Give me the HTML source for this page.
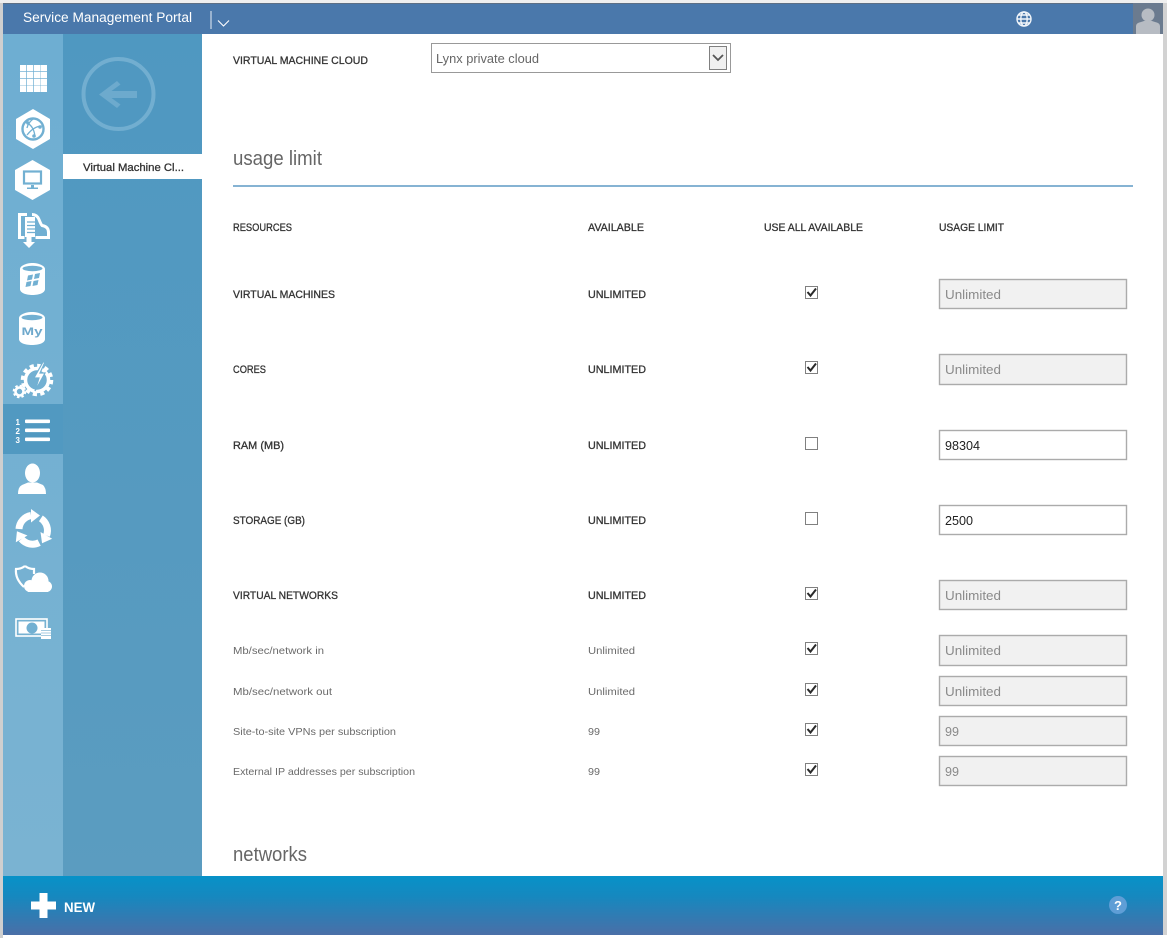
<!DOCTYPE html>
<html lang="en"><head><meta charset="utf-8"><title>Service Management Portal</title>
<style>
html,body{margin:0;padding:0;background:#fff}
svg{display:block}
text{font-family:"Liberation Sans",sans-serif}
.h{font-size:11px;fill:#333;stroke:#333;stroke-width:.3px}
.s{font-size:10.5px;fill:#6a6a6a}
.i{font-size:13px;fill:#8a8a8a}
.v{font-size:13px;fill:#222}
.b{fill:#f1f1f1;stroke:#ababab;stroke-width:1.4}
.w{fill:#fff;stroke:#ababab;stroke-width:1.4}
.c{fill:#fff;stroke:#808080;stroke-width:1}
.k{fill:none;stroke:#2a2a2a;stroke-width:2}
</style></head><body>
<svg width="1167" height="938" viewBox="0 0 1167 938" xmlns="http://www.w3.org/2000/svg">
<defs>
<linearGradient id="bot" x1="0" y1="0" x2="0" y2="1"><stop offset="0" stop-color="#0792c8"/><stop offset=".35" stop-color="#1688bf"/><stop offset="1" stop-color="#4a6fa7"/></linearGradient>
<linearGradient id="side" x1="0" y1="0" x2="0" y2="1"><stop offset="0" stop-color="#6eaed2"/><stop offset="1" stop-color="#7ab3d2"/></linearGradient>
<linearGradient id="sub" x1="0" y1="0" x2="0" y2="1"><stop offset="0" stop-color="#4f98c1"/><stop offset="1" stop-color="#5b9cc0"/></linearGradient>
</defs>
<rect width="1167" height="938" fill="#fff"/>
<rect x="0" y="0" width="3" height="938" fill="#cfcfcf"/>
<rect x="1163" y="3" width="4" height="932" fill="#d2d2d2"/>
<rect x="0" y="0" width="1167" height="3" fill="#efefef"/>
<rect x="3" y="3" width="1160" height="31" fill="#4a78ab"/>
<rect x="3" y="3" width="1160" height="1" fill="#5d6f85"/>

<!-- top bar -->
<text x="23" y="22" font-size="13.5" fill="#fff" textLength="169" lengthAdjust="spacingAndGlyphs">Service Management Portal</text>
<rect x="210.500" y="11" width="1" height="18" fill="#e8eef5"/>
<path d="M218 20.500l5.500 5.500 5.500-5.500" fill="none" stroke="#fff" stroke-width="1.100"/>
<g fill="none" stroke="#f2f6fa" stroke-width="1.400"><circle cx="1024" cy="19" r="7"/><ellipse cx="1024" cy="19" rx="3.200" ry="7"/><path d="M1017 19h14M1018 15h12M1018 23h12"/></g>
<rect x="1133" y="3" width="30" height="31" fill="#6b7b8f"/>
<circle cx="1148" cy="15" r="6.500" fill="#b7bcc3"/>
<path d="M1136 34v-8q0-3 5-4l3-1h8l3 1q5 1 5 4v8z" fill="#b7bcc3"/>

<!-- side -->
<rect x="3" y="34" width="60" height="842" fill="url(#side)"/>
<rect x="63" y="34" width="139" height="842" fill="url(#sub)"/>
<rect x="3" y="404" width="60" height="50" fill="#5199c1"/>

<!-- back -->
<circle cx="118.500" cy="94" r="35" fill="none" stroke="#72aed0" stroke-width="4"/>
<path d="M99 94.500L117 81l3.500 3.500-9 6.500h25.500v7h-25.500l9 6.500-3.500 3.500z" fill="#6daacd"/>
<rect x="63" y="154" width="139" height="25" fill="#fff"/>
<text x="83" y="171" class="h" textLength="101" lengthAdjust="spacingAndGlyphs">Virtual Machine Cl...</text>

<!-- grid icon -->
<g fill="#fff">
<g><rect x="20" y="65" width="6.300" height="6.300"/><rect x="27" y="65" width="6.300" height="6.300"/><rect x="34" y="65" width="6.300" height="6.300"/><rect x="40.700" y="65" width="6.300" height="6.300"/></g>
<g><rect x="20" y="72" width="6.300" height="6.300"/><rect x="27" y="72" width="6.300" height="6.300"/><rect x="34" y="72" width="6.300" height="6.300"/><rect x="40.700" y="72" width="6.300" height="6.300"/></g>
<g><rect x="20" y="79" width="6.300" height="6.300"/><rect x="27" y="79" width="6.300" height="6.300"/><rect x="34" y="79" width="6.300" height="6.300"/><rect x="40.700" y="79" width="6.300" height="6.300"/></g>
<g><rect x="20" y="85.700" width="6.300" height="6.300"/><rect x="27" y="85.700" width="6.300" height="6.300"/><rect x="34" y="85.700" width="6.300" height="6.300"/><rect x="40.700" y="85.700" width="6.300" height="6.300"/></g>
</g>

<!-- hex globe -->
<path d="M33 109l17 10v20l-17 10-17-10v-20z" fill="#fff"/>
<g fill="none" stroke="#72b0d2"><circle cx="33" cy="129" r="10.500" stroke-width="2.400"/><path d="M25 122q9 3 10 15M27 135q7-9 15-9M33 119q-5 4-6 9" stroke-width="1.300"/></g>
<circle cx="28" cy="123" r="1.800" fill="#72b0d2"/><circle cx="40" cy="127" r="1.800" fill="#72b0d2"/><circle cx="34" cy="136" r="1.800" fill="#72b0d2"/>

<!-- hex monitor -->
<path d="M32.500 160l17.500 10v20l-17.500 10-17.500-10v-20z" fill="#fff"/>
<rect x="24" y="171.500" width="17" height="12" fill="#fff" stroke="#72b0d2" stroke-width="2.200"/>
<path d="M31 185h3v2.500h4v1.500h-11v-1.500h4z" fill="#72b0d2"/>

<!-- storage -->
<path d="M27 214.500h-7.500v23h5" fill="none" stroke="#fff" stroke-width="3"/>
<path d="M32 214.500q5 0 7 5t3 6q6.500 1 6.500 7v5h-13" fill="none" stroke="#fff" stroke-width="3"/>
<rect x="25" y="217" width="10" height="20" fill="#fff"/>
<path d="M27 222h8M27 225.500h8M27 229h8M27 232.500h8" stroke="#72b0d2" stroke-width="1.200"/>
<path d="M26.500 236h5v6h3.500l-6 6-6-6h3.500z" fill="#fff"/>

<!-- SQL db -->
<path d="M20 269c0-3 6-6 12.500-6s12.500 3 12.500 6v20c0 4-6 6-12.500 6s-12.500-2-12.500-6z" fill="#fff"/>
<ellipse cx="32.500" cy="268.500" rx="10" ry="2.700" fill="#72b0d2"/>
<g fill="#72b0d2"><path d="M28 275.500l5-1-1 5-5 1zM35 274l5-1-1 5-5 1zM26.500 282l5-1-1 5-5 1zM33.500 281l5-1-1 5-5 1z"/></g>

<!-- My db -->
<path d="M19 318c0-3 6-6 13-6s13 3 13 6v21c0 4-6 6-13 6s-13-2-13-6z" fill="#fff"/>
<ellipse cx="32" cy="317.500" rx="10.500" ry="2.700" fill="#72b0d2"/>
<text x="32" y="335" font-size="11" font-weight="bold" fill="#6fa9cc" text-anchor="middle" textLength="21" lengthAdjust="spacingAndGlyphs">My</text>

<!-- gears -->
<circle cx="37" cy="380" r="11.500" fill="none" stroke="#fff" stroke-width="3.500"/>
<circle cx="37" cy="380" r="14.500" fill="none" stroke="#fff" stroke-width="3.500" stroke-dasharray="4.200 3.400"/>
<path d="M43 362l-9 16h5l-4 13 10-18h-5l5-11z" fill="#fff" stroke="#72b0d2" stroke-width="1.200"/>
<circle cx="19.500" cy="391.500" r="4" fill="none" stroke="#fff" stroke-width="2.600"/>
<circle cx="19.500" cy="391.500" r="5.600" fill="none" stroke="#fff" stroke-width="2.400" stroke-dasharray="2.400 2"/>

<!-- list active -->
<g fill="#fff">
<rect x="25" y="419.500" width="25" height="3.600" rx="1"/><rect x="25" y="428.500" width="25" height="3.600" rx="1"/><rect x="25" y="437.500" width="25" height="3.600" rx="1"/>
<text x="15.500" y="425" font-size="8" font-weight="bold">1</text><text x="15.500" y="434" font-size="8" font-weight="bold">2</text><text x="15.500" y="443" font-size="8" font-weight="bold">3</text>
</g>

<!-- user -->
<ellipse cx="32.500" cy="473" rx="7.500" ry="9.500" fill="#fff"/>
<path d="M18 494q0-7 4-9l6-2.500h9l6 2.500q3 3 3 9z" fill="#fff"/>

<!-- recycle -->
<g transform="translate(33 530)" fill="#fff">
<g><path d="M-14-1A14.500 14.500 0 0 1-2-14.500" fill="none" stroke="#fff" stroke-width="7"/><path d="M-2-21L7-14.500-2-7.500z"/></g>
<g transform="rotate(120)"><path d="M-14-1A14.500 14.500 0 0 1-2-14.500" fill="none" stroke="#fff" stroke-width="7"/><path d="M-2-21L7-14.500-2-7.500z"/></g>
<g transform="rotate(240)"><path d="M-14-1A14.500 14.500 0 0 1-2-14.500" fill="none" stroke="#fff" stroke-width="7"/><path d="M-2-21L7-14.500-2-7.500z"/></g>
</g>

<!-- shield cloud -->
<path d="M25 566q4 3 9 3v5M25 566q-4 3-9 3q-1 10 8 18" fill="none" stroke="#fff" stroke-width="2.200"/>
<g fill="#fff"><circle cx="30" cy="586" r="6"/><circle cx="40" cy="581" r="8.500"/><circle cx="46.500" cy="586.500" r="5.500"/><rect x="28" y="584" width="20" height="8"/></g>

<!-- money -->
<rect x="16" y="619" width="31" height="17" fill="none" stroke="#fff" stroke-width="1.600"/>
<rect x="18.500" y="621.500" width="26" height="12" fill="#fff"/>
<circle cx="32" cy="628" r="5.500" fill="#72b0d2"/>
<rect x="41" y="628" width="10" height="11" fill="#fff"/>
<path d="M41 630.500h10M41 633h10M41 635.500h10" stroke="#a5cbe0" stroke-width="1"/>

<!-- content -->
<text x="233" y="64" class="h" textLength="135" lengthAdjust="spacingAndGlyphs">VIRTUAL MACHINE CLOUD</text>
<rect x="431.500" y="43.500" width="299" height="29" fill="#fff" stroke="#999"/>
<text x="436" y="63" font-size="13" fill="#666" textLength="103" lengthAdjust="spacingAndGlyphs">Lynx private cloud</text>
<rect x="709.500" y="46.500" width="17" height="23" fill="#f0f0f0" stroke="#808080"/>
<path d="M713 55l5 5 5-5" fill="none" stroke="#555" stroke-width="1.800"/>

<text x="233" y="165" font-size="20" fill="#666" textLength="89" lengthAdjust="spacingAndGlyphs">usage limit</text>
<rect x="233" y="185" width="900" height="2" fill="#86b3d3"/>

<text x="233" y="231" class="h" textLength="59" lengthAdjust="spacingAndGlyphs">RESOURCES</text>
<text x="588" y="231" class="h" textLength="56" lengthAdjust="spacingAndGlyphs">AVAILABLE</text>
<text x="764" y="231" class="h" textLength="99" lengthAdjust="spacingAndGlyphs">USE ALL AVAILABLE</text>
<text x="939" y="231" class="h" textLength="65" lengthAdjust="spacingAndGlyphs">USAGE LIMIT</text>

<text x="233" y="298" class="h" textLength="102" lengthAdjust="spacingAndGlyphs">VIRTUAL MACHINES</text>
<text x="588" y="298" class="h" textLength="58" lengthAdjust="spacingAndGlyphs">UNLIMITED</text>
<rect x="805.500" y="286.500" width="12" height="12" class="c"/><path d="M807.500 292l3 3.500 5.500-7" class="k"/>
<rect x="939.500" y="279.500" width="187" height="29" class="b"/>
<text x="945" y="299" class="i" textLength="56" lengthAdjust="spacingAndGlyphs">Unlimited</text>

<text x="233" y="373" class="h" textLength="33" lengthAdjust="spacingAndGlyphs">CORES</text>
<text x="588" y="373" class="h" textLength="58" lengthAdjust="spacingAndGlyphs">UNLIMITED</text>
<rect x="805.500" y="361.500" width="12" height="12" class="c"/><path d="M807.500 367l3 3.500 5.500-7" class="k"/>
<rect x="939.500" y="354.500" width="187" height="30" class="b"/>
<text x="945" y="374" class="i" textLength="56" lengthAdjust="spacingAndGlyphs">Unlimited</text>

<text x="233" y="449" class="h" textLength="51" lengthAdjust="spacingAndGlyphs">RAM (MB)</text>
<text x="588" y="449" class="h" textLength="58" lengthAdjust="spacingAndGlyphs">UNLIMITED</text>
<rect x="805.500" y="437.500" width="12" height="12" class="c"/>
<rect x="939.500" y="430.500" width="187" height="29" class="w"/>
<text x="945" y="450" class="v" textLength="35" lengthAdjust="spacingAndGlyphs">98304</text>

<text x="233" y="524" class="h" textLength="72" lengthAdjust="spacingAndGlyphs">STORAGE (GB)</text>
<text x="588" y="524" class="h" textLength="58" lengthAdjust="spacingAndGlyphs">UNLIMITED</text>
<rect x="805.500" y="512.500" width="12" height="12" class="c"/>
<rect x="939.500" y="505.500" width="187" height="29" class="w"/>
<text x="945" y="525" class="v" textLength="28" lengthAdjust="spacingAndGlyphs">2500</text>

<text x="233" y="599" class="h" textLength="105" lengthAdjust="spacingAndGlyphs">VIRTUAL NETWORKS</text>
<text x="588" y="599" class="h" textLength="58" lengthAdjust="spacingAndGlyphs">UNLIMITED</text>
<rect x="805.500" y="587.500" width="12" height="12" class="c"/><path d="M807.500 593l3 3.500 5.500-7" class="k"/>
<rect x="939.500" y="580.500" width="187" height="29" class="b"/>
<text x="945" y="600" class="i" textLength="56" lengthAdjust="spacingAndGlyphs">Unlimited</text>

<text x="233" y="654" class="s" textLength="91" lengthAdjust="spacingAndGlyphs">Mb/sec/network in</text>
<text x="588" y="654" class="s" textLength="47" lengthAdjust="spacingAndGlyphs">Unlimited</text>
<rect x="805.500" y="642.500" width="12" height="12" class="c"/><path d="M807.500 648l3 3.500 5.500-7" class="k"/>
<rect x="939.500" y="635.500" width="187" height="30" class="b"/>
<text x="945" y="655" class="i" textLength="56" lengthAdjust="spacingAndGlyphs">Unlimited</text>

<text x="233" y="695" class="s" textLength="99" lengthAdjust="spacingAndGlyphs">Mb/sec/network out</text>
<text x="588" y="695" class="s" textLength="47" lengthAdjust="spacingAndGlyphs">Unlimited</text>
<rect x="805.500" y="683.500" width="12" height="12" class="c"/><path d="M807.500 689l3 3.500 5.500-7" class="k"/>
<rect x="939.500" y="676.500" width="187" height="29" class="b"/>
<text x="945" y="696" class="i" textLength="56" lengthAdjust="spacingAndGlyphs">Unlimited</text>

<text x="233" y="735" class="s" textLength="163" lengthAdjust="spacingAndGlyphs">Site-to-site VPNs per subscription</text>
<text x="588" y="735" class="s" textLength="12" lengthAdjust="spacingAndGlyphs">99</text>
<rect x="805.500" y="723.500" width="12" height="12" class="c"/><path d="M807.500 729l3 3.500 5.500-7" class="k"/>
<rect x="939.500" y="716.500" width="187" height="29" class="b"/>
<text x="945" y="736" class="i" textLength="14" lengthAdjust="spacingAndGlyphs">99</text>

<text x="233" y="775" class="s" textLength="182" lengthAdjust="spacingAndGlyphs">External IP addresses per subscription</text>
<text x="588" y="775" class="s" textLength="12" lengthAdjust="spacingAndGlyphs">99</text>
<rect x="805.500" y="763.500" width="12" height="12" class="c"/><path d="M807.500 769l3 3.500 5.500-7" class="k"/>
<rect x="939.500" y="756.500" width="187" height="29" class="b"/>
<text x="945" y="776" class="i" textLength="14" lengthAdjust="spacingAndGlyphs">99</text>

<text x="233" y="861" font-size="20" fill="#666" textLength="74" lengthAdjust="spacingAndGlyphs">networks</text>

<!-- bottom -->
<rect x="3" y="876" width="1160" height="59" fill="url(#bot)"/>
<path d="M39.500 893h8v8.500h8.500v8h-8.500v8.500h-8v-8.500h-8.500v-8h8.500z" fill="#fff"/>
<text x="64" y="912" font-size="13.500" font-weight="bold" fill="#fff" textLength="31" lengthAdjust="spacingAndGlyphs">NEW</text>
<circle cx="1118" cy="905" r="9" fill="#5f9ed6"/>
<text x="1118" y="910" font-size="13" font-weight="bold" fill="#fff" text-anchor="middle">?</text>
</svg>
</body></html>
